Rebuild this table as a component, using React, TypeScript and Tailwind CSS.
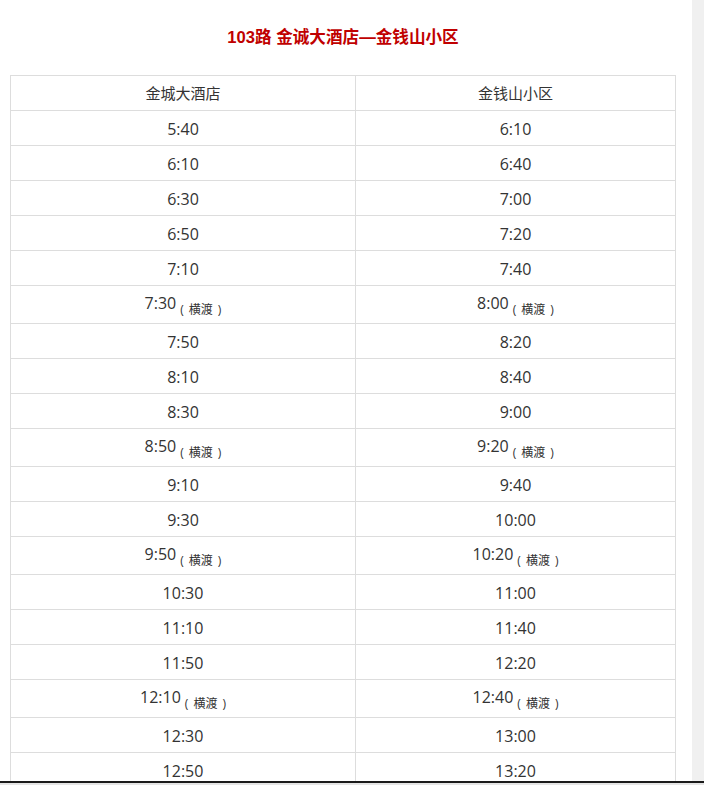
const rows: [string, string, boolean][] = [
  ["5:40", "6:10", false],
  ["6:10", "6:40", false],
  ["6:30", "7:00", false],
  ["6:50", "7:20", false],
  ["7:10", "7:40", false],
  ["7:30", "8:00", true],
  ["7:50", "8:20", false],
  ["8:10", "8:40", false],
  ["8:30", "9:00", false],
  ["8:50", "9:20", true],
  ["9:10", "9:40", false],
  ["9:30", "10:00", false],
  ["9:50", "10:20", true],
  ["10:30", "11:00", false],
  ["11:10", "11:40", false],
  ["11:50", "12:20", false],
  ["12:10", "12:40", true],
  ["12:30", "13:00", false],
  ["12:50", "13:20", false],
  ["13:10", "13:40", false],
  ["13:30", "14:00", false],
];

function Time({ value, ferry }: { value: string; ferry: boolean }) {
  return (
    <span className="text-[16px] leading-[20px]">
      {value}
      {ferry && (
        <span className="ml-[4px] text-[12px] align-[-5px]">
          (<span className="px-[5px]">横渡</span>)
        </span>
      )}
    </span>
  );
}

const cell = "flex items-center justify-center border-b border-r border-[#ddd]";

export default function App() {
  return (
    <div
      className="h-[785px] w-[704px] overflow-hidden bg-white text-[#333]"
      style={{ fontFamily: '"Open Sans", "Noto Sans CJK SC", sans-serif' }}
    >
      <div className="flex h-[781px] overflow-hidden">
        <div className="w-[692px] shrink-0">
          {/* Title */}
          <div className="ml-[10px] w-[666px] pt-[26px] pb-[25px] text-center">
            <h1
              className="text-[16.6px] font-bold leading-6 text-[#c00000]"
              style={{ fontFamily: '"Liberation Sans", "Noto Sans CJK SC", sans-serif' }}
            >
              103路 金诚大酒店—金钱山小区
            </h1>
          </div>

          {/* Timetable */}
          <div className="ml-[10px] w-[666px] border-l border-t border-[#ddd] text-[15px]">
            <div className="flex h-[35px]">
              <div className={`${cell} w-[345px]`}>金城大酒店</div>
              <div className={`${cell} w-[320px]`}>金钱山小区</div>
            </div>
            {rows.map(([a, b, ferry], i) => (
              <div key={i} className={ferry ? "flex h-[38px]" : "flex h-[35px]"}>
                <div className={`${cell} w-[345px] ${ferry ? "pt-[4px]" : "pt-[2px]"}`}>
                  <Time value={a} ferry={ferry} />
                </div>
                <div className={`${cell} w-[320px] ${ferry ? "pt-[4px]" : "pt-[2px]"}`}>
                  <Time value={b} ferry={ferry} />
                </div>
              </div>
            ))}
          </div>
        </div>
        {/* scrollbar track */}
        <div className="w-[12px] shrink-0 bg-[#f0f0f0]" />
      </div>
      <div className="h-[2px] bg-[#1a1a1a]" />
      <div className="h-[2px] bg-[#e4e4e4]" />
    </div>
  );
}
